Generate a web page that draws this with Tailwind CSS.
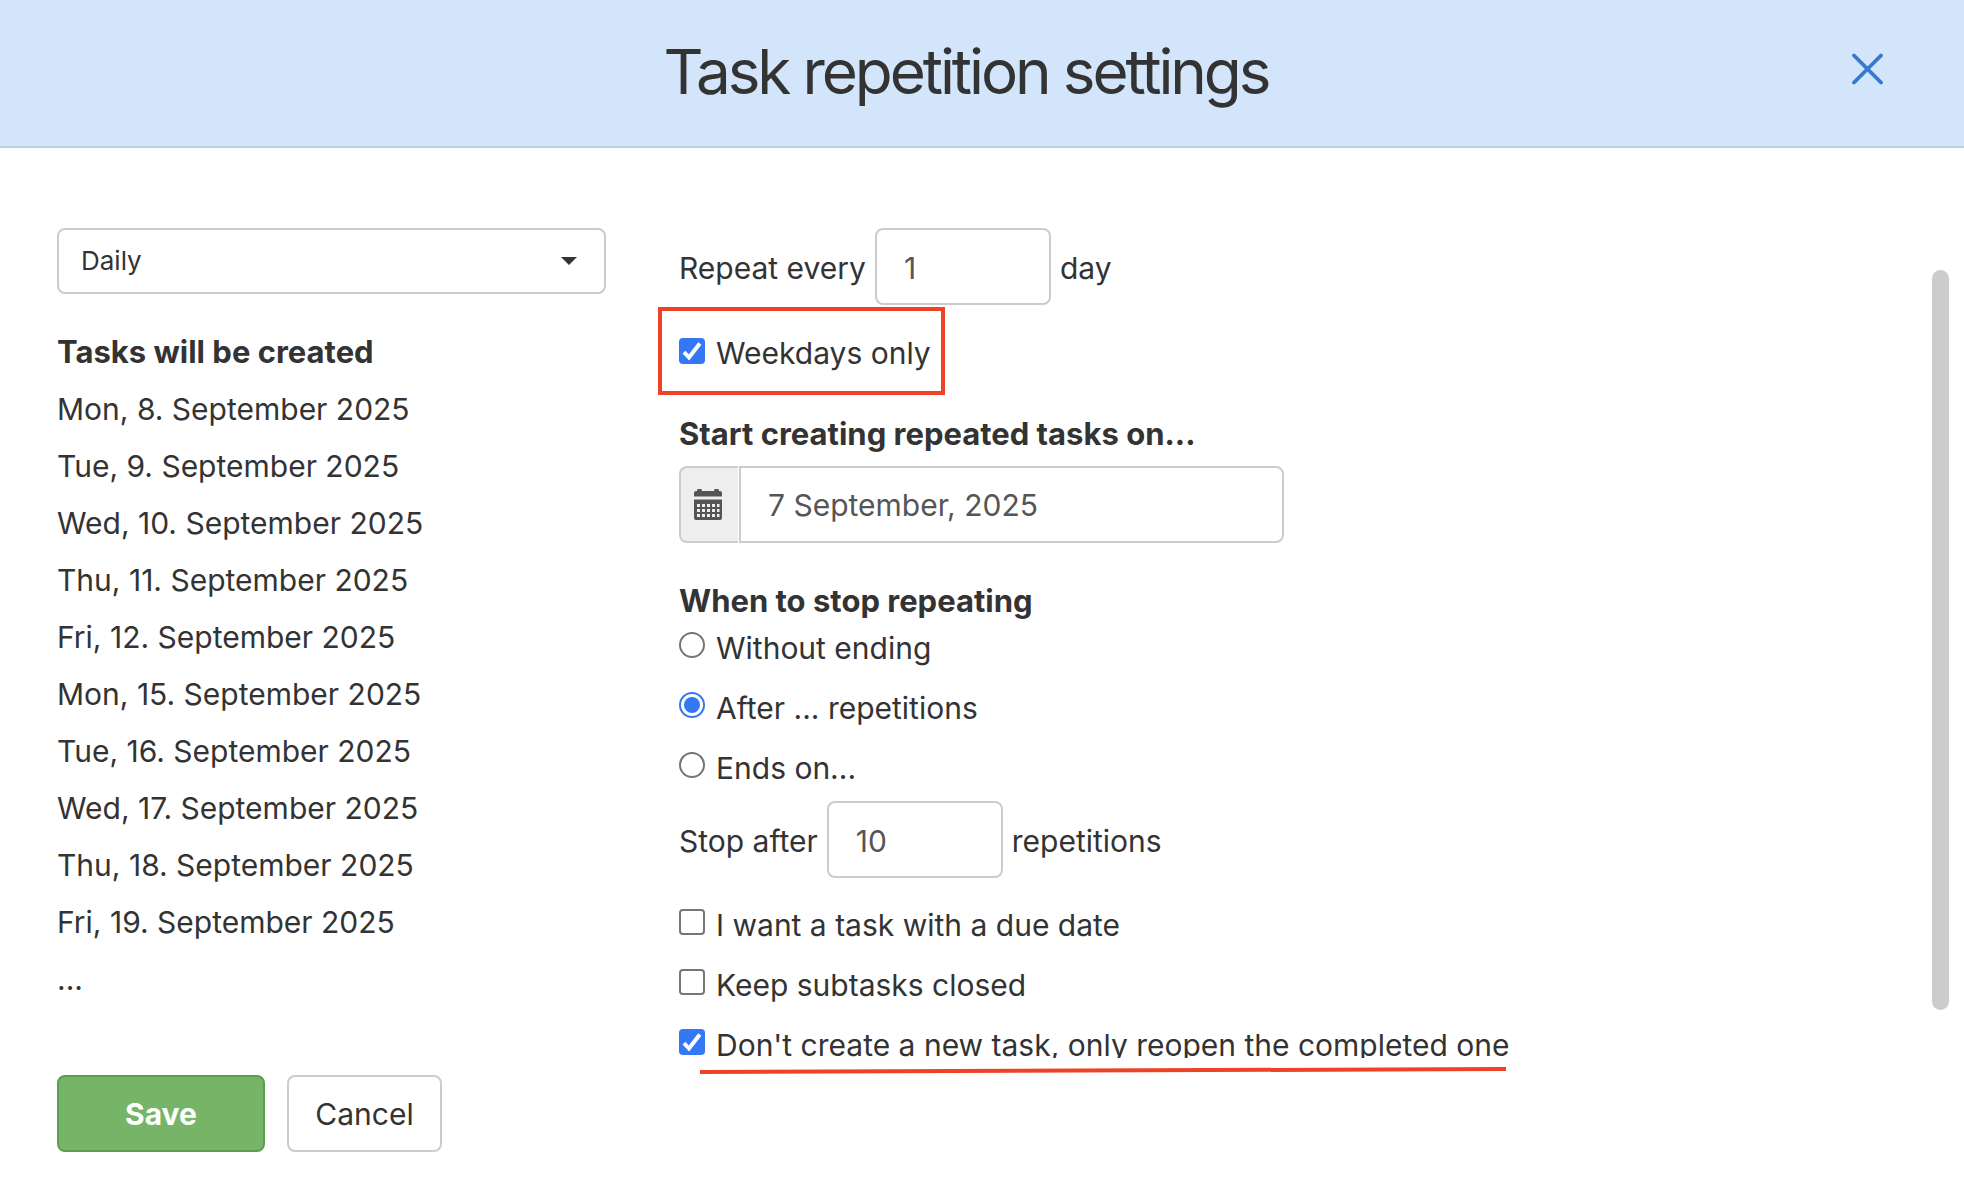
<!DOCTYPE html>
<html lang="en">
<head>
<meta charset="utf-8">
<title>Task repetition settings</title>
<script src="https://cdn.jsdelivr.net/npm/@tailwindcss/browser@4"></script>
</head>
<body class="flex h-screen flex-col bg-white font-['Inter',sans-serif] text-[30px] leading-[57px] text-[#333]">
  <header class="relative flex h-[148px] shrink-0 items-center justify-center border-b-2 border-[#bccde0] bg-[#d3e5fa] pr-8 pb-[2px]">
    <h1 class="text-[62px] leading-[80px] tracking-tighter">Task repetition settings</h1>
    <button type="button" aria-label="Close" class="absolute top-[53px] right-20 size-8">
      <svg viewBox="0 0 32 32" class="size-8" fill="none" stroke="#3478cf" stroke-width="3.8" stroke-linecap="round"><path d="M2 2.500 29 29.500M29 2.500 2 29.500"/></svg>
    </button>
  </header>

  <main class="relative min-h-0 flex-1 overflow-hidden pt-20 pr-20 pl-[57px]">
    <div class="flex gap-[73px]">
      <section class="w-[549px] shrink-0">
        <div class="relative">
          <select aria-label="Frequency" class="block h-[66px] w-full appearance-none rounded-lg border-2 border-[#ccc] bg-white px-[22px] text-[26px] leading-8">
            <option>Daily</option>
          </select>
          <svg class="pointer-events-none absolute top-[29px] right-[29px] h-2 w-4" viewBox="0 0 16 8" fill="#333"><path d="M0 0h16L8 8z"/></svg>
        </div>
        <h2 class="mt-[29px] mb-px text-[31px] leading-[57px] font-bold">Tasks will be created</h2>
        <ul>
          <li>Mon, 8. September 2025</li>
          <li>Tue, 9. September 2025</li>
          <li>Wed, 10. September 2025</li>
          <li>Thu, 11. September 2025</li>
          <li>Fri, 12. September 2025</li>
          <li>Mon, 15. September 2025</li>
          <li>Tue, 16. September 2025</li>
          <li>Wed, 17. September 2025</li>
          <li>Thu, 18. September 2025</li>
          <li>Fri, 19. September 2025</li>
          <li>...</li>
        </ul>
      </section>

      <form class="min-w-0 flex-1 whitespace-nowrap">
        <div class="flex items-center gap-[9px]">
          <label for="every" class="pt-[3px]">Repeat every</label>
          <input id="every" type="text" value="1" class="h-[77px] w-[176px] rounded-lg border-2 border-[#ccc] px-[27px] pt-[2px] text-[#555]">
          <span class="pt-[3px]">day</span>
        </div>

        <div class="mt-[2px] -ml-[21px] flex h-[88px] w-[287px] items-center border-4 border-[#ed4226] pt-[5px] pl-[17px]">
          <label class="flex items-center gap-[11px]">
            <span class="grid pb-[6px]">
              <input type="checkbox" checked class="size-[26px] appearance-none rounded bg-[#3478f6] [grid-area:1/1]">
              <svg class="pointer-events-none size-[26px] [grid-area:1/1]" viewBox="0 0 26 26" fill="none" stroke="#fff" stroke-width="4"><path d="M5 14.2 10 19.5 20.8 5.5"/></svg>
            </span>
            Weekdays only
          </label>
        </div>

        <label for="start" class="mt-[10px] block text-[31px] leading-[57px] font-bold">Start creating repeated tasks on...</label>
        <div class="mt-1 flex h-[77px] w-[605px]">
          <span class="mr-px flex w-[59px] items-center justify-center rounded-l-lg border-2 border-r-0 border-[#ccc] bg-[#eee] pr-[3px]">
            <svg viewBox="0 0 28 31" class="h-[31px] w-7" fill="#555">
              <path d="M0 4a2 2 0 0 1 2-2h1a2.500 2.500 0 0 1 5 0h12a2.500 2.500 0 0 1 5 0h1a2 2 0 0 1 2 2v3.500H0z"/>
              <path fill-rule="evenodd" d="M0 10.500h28V29a2 2 0 0 1-2 2H2a2 2 0 0 1-2-2zM3 15v3h3v-3zM8 15v3h3v-3zM13 15v3h3v-3zM18 15v3h3v-3zM23 15v3h2.500v-3zM3 20v3h3v-3zM8 20v3h3v-3zM13 20v3h3v-3zM18 20v3h3v-3zM23 20v3h2.500v-3zM3 25v3h3v-3zM8 25v3h3v-3zM13 25v3h3v-3zM18 25v3h3v-3zM23 25v3h2.500v-3z"/>
            </svg>
          </span>
          <input id="start" type="text" value="7 September, 2025" class="min-w-0 flex-1 rounded-r-lg border-2 border-[#ccc] px-[27px] pt-[2px] text-[#555]">
        </div>

        <fieldset class="mt-[29px]">
          <legend class="block text-[31px] leading-[57px] font-bold">When to stop repeating</legend>
          <label class="-mt-[11px] flex h-[60px] items-center gap-[11px]">
            <span class="grid pb-[6px]"><input type="radio" name="stop" class="size-[26px] appearance-none rounded-full border-2 border-[#767676]"></span>
            Without ending
          </label>
          <label class="flex h-[60px] items-center gap-[11px]">
            <span class="grid place-items-center pb-[6px]">
              <input type="radio" name="stop" checked class="size-[26px] appearance-none rounded-full border-2 border-[#3478f6] [grid-area:1/1]">
              <span class="pointer-events-none size-4 rounded-full bg-[#3478f6] [grid-area:1/1]"></span>
            </span>
            After ... repetitions
          </label>
          <label class="flex h-[60px] items-center gap-[11px]">
            <span class="grid pb-[6px]"><input type="radio" name="stop" class="size-[26px] appearance-none rounded-full border-2 border-[#767676]"></span>
            Ends on...
          </label>
        </fieldset>

        <div class="mt-[3px] flex items-center gap-[9px]">
          <label for="count" class="pt-[3px]">Stop after</label>
          <input id="count" type="text" value="10" class="h-[77px] w-[176px] rounded-lg border-2 border-[#ccc] px-[27px] pt-[2px] text-[#555]">
          <span class="pt-[3px]">repetitions</span>
        </div>

        <div class="mt-[17px]">
          <label class="flex h-[60px] items-center gap-[11px]">
            <span class="grid pb-[6px]"><input type="checkbox" class="size-[26px] appearance-none rounded border-2 border-[#767676]"></span>
            I want a task with a due date
          </label>
          <label class="flex h-[60px] items-center gap-[11px]">
            <span class="grid pb-[6px]"><input type="checkbox" class="size-[26px] appearance-none rounded border-2 border-[#767676]"></span>
            Keep subtasks closed
          </label>
          <label class="flex h-[60px] items-center gap-[11px]">
            <span class="grid pb-[6px]">
              <input type="checkbox" checked class="size-[26px] appearance-none rounded bg-[#3478f6] [grid-area:1/1]">
              <svg class="pointer-events-none size-[26px] [grid-area:1/1]" viewBox="0 0 26 26" fill="none" stroke="#fff" stroke-width="4"><path d="M5 14.2 10 19.5 20.8 5.5"/></svg>
            </span>
            Don't create a new task, only reopen the completed one
          </label>
        </div>
      </form>
    </div>
    <div class="absolute top-[122px] right-[15px] bottom-12 w-[17px] rounded-full bg-[#ccc]"></div>
  </main>

  <footer class="relative flex shrink-0 gap-[22px] pt-[17px] pb-[46px] pl-[57px]">
    <svg class="absolute top-2 left-[700px] h-[9px] w-[806px]" viewBox="0 0 806 9" stroke="#ed4226" stroke-width="4"><path d="M0 6 806 3"/></svg>
    <button type="button" class="h-[77px] w-[208px] rounded-lg border-2 border-[#5a9e4e] bg-[#76b568] pt-[2px] font-bold text-white">Save</button>
    <button type="button" class="h-[77px] w-[155px] rounded-lg border-2 border-[#ccc] bg-white pt-[2px]">Cancel</button>
  </footer>
</body>
</html>
